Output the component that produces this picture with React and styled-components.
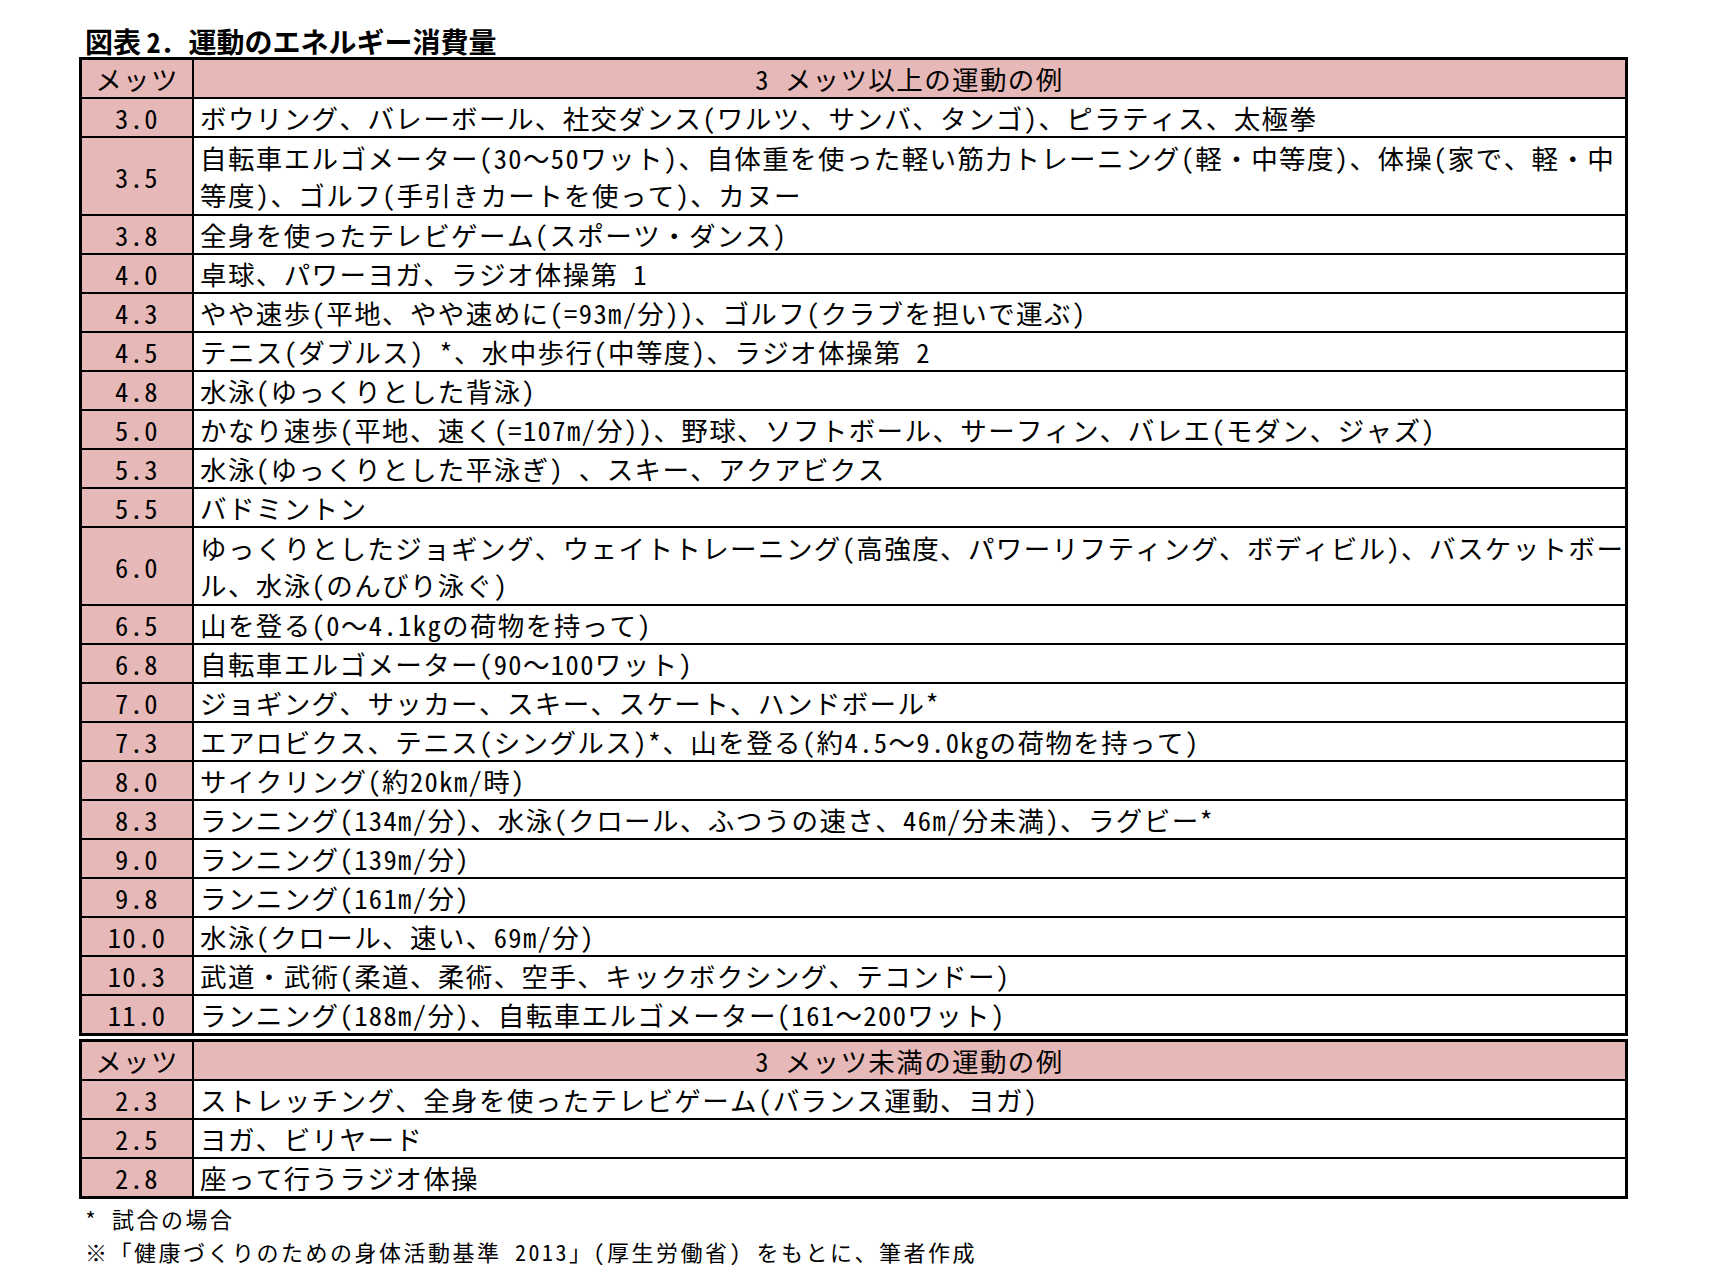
import React from 'react';
import styled, { createGlobalStyle } from 'styled-components';

const FONT = '"Noto Sans Mono CJK JP", "Noto Sans CJK JP", "Noto Sans", sans-serif';

const GlobalStyle = createGlobalStyle`
  html, body { margin: 0; padding: 0; background: #fff; }
  body { font-family: ${FONT}; color: #000; }
`;

const Page = styled.div`
  width: 1710px;
  min-height: 1282px;
  box-sizing: border-box;
  padding: 26px 0 0 79px;
  font-family: ${FONT};
  color: #000;
`;

const Title = styled.h1`
  margin: 0;
  padding-left: 6px;
  font-size: 28px;
  font-weight: 700;
  line-height: 31px;
  letter-spacing: 0;
  white-space: pre;
`;

const Sheet = styled.div`
  width: 1549px;
  box-sizing: border-box;
  display: grid;
  grid-template-columns: 110px 1fr;
  gap: 2px;
  border: 3px solid #000;
  background: #000;
  & + & { margin-top: 3px; }
`;

const Cell = styled.div`
  background: ${p => (p.$pink ? '#e6b8b7' : '#fff')};
  min-height: ${p => p.$lines * 39 - 2}px;
  display: flex;
  align-items: center;
  justify-content: ${p => (p.$center ? 'center' : 'flex-start')};
  padding-left: ${p => (p.$center ? '0' : '6px')};
  font-size: 26.5px;
  letter-spacing: 1.4px;
  line-height: 37px;
  white-space: pre;
`;

const Notes = styled.div`
  padding: 3px 0 0 6px;
  font-size: 22px;
  letter-spacing: 2.5px;
  line-height: 33px;
  white-space: pre;
`;

const upper = [
  ['3.0', 'ボウリング、バレーボール、社交ダンス(ワルツ、サンバ、タンゴ)、ピラティス、太極拳'],
  ['3.5', '自転車エルゴメーター(30～50ワット)、自体重を使った軽い筋力トレーニング(軽・中等度)、体操(家で、軽・中\n等度)、ゴルフ(手引きカートを使って)、カヌー', 2],
  ['3.8', '全身を使ったテレビゲーム(スポーツ・ダンス)'],
  ['4.0', '卓球、パワーヨガ、ラジオ体操第 1'],
  ['4.3', 'やや速歩(平地、やや速めに(=93m/分))、ゴルフ(クラブを担いで運ぶ)'],
  ['4.5', 'テニス(ダブルス) *、水中歩行(中等度)、ラジオ体操第 2'],
  ['4.8', '水泳(ゆっくりとした背泳)'],
  ['5.0', 'かなり速歩(平地、速く(=107m/分))、野球、ソフトボール、サーフィン、バレエ(モダン、ジャズ)'],
  ['5.3', '水泳(ゆっくりとした平泳ぎ) 、スキー、アクアビクス'],
  ['5.5', 'バドミントン'],
  ['6.0', 'ゆっくりとしたジョギング、ウェイトトレーニング(高強度、パワーリフティング、ボディビル)、バスケットボー\nル、水泳(のんびり泳ぐ)', 2],
  ['6.5', '山を登る(0～4.1kgの荷物を持って)'],
  ['6.8', '自転車エルゴメーター(90～100ワット)'],
  ['7.0', 'ジョギング、サッカー、スキー、スケート、ハンドボール*'],
  ['7.3', 'エアロビクス、テニス(シングルス)*、山を登る(約4.5～9.0kgの荷物を持って)'],
  ['8.0', 'サイクリング(約20km/時)'],
  ['8.3', 'ランニング(134m/分)、水泳(クロール、ふつうの速さ、46m/分未満)、ラグビー*'],
  ['9.0', 'ランニング(139m/分)'],
  ['9.8', 'ランニング(161m/分)'],
  ['10.0', '水泳(クロール、速い、69m/分)'],
  ['10.3', '武道・武術(柔道、柔術、空手、キックボクシング、テコンドー)'],
  ['11.0', 'ランニング(188m/分)、自転車エルゴメーター(161～200ワット)'],
];

const lower = [
  ['2.3', 'ストレッチング、全身を使ったテレビゲーム(バランス運動、ヨガ)'],
  ['2.5', 'ヨガ、ビリヤード'],
  ['2.8', '座って行うラジオ体操'],
];

function MetsTable({ heading, rows }) {
  return (
    <Sheet>
      <Cell $pink $center $lines={1}>メッツ</Cell>
      <Cell $pink $center $lines={1}>{heading}</Cell>
      {rows.map(([m, text, lines = 1]) => (
        <React.Fragment key={m}>
          <Cell $pink $center $lines={lines}>{m}</Cell>
          <Cell $lines={lines}>{text}</Cell>
        </React.Fragment>
      ))}
    </Sheet>
  );
}

export default function App() {
  return (
    <>
      <GlobalStyle />
      <Page>
        <Title>{'図表\u20092.\u2002運動のエネルギー消費量'}</Title>
        <MetsTable heading="3 メッツ以上の運動の例" rows={upper} />
        <MetsTable heading="3 メッツ未満の運動の例" rows={lower} />
        <Notes>
          {'* 試合の場合\n※「健康づくりのための身体活動基準 2013」(厚生労働省) をもとに、筆者作成'}
        </Notes>
      </Page>
    </>
  );
}
